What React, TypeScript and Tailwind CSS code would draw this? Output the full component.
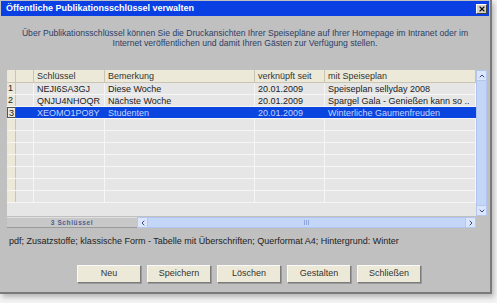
import { ChevronLeft, ChevronRight, ChevronUp, ChevronDown, X } from 'lucide-react';

type Row = { key: string; note: string; since: string; plan: string };

const rows: Row[] = [
  { key: 'NEJI6SA3GJ', note: 'Diese Woche', since: '20.01.2009', plan: 'Speiseplan sellyday 2008' },
  { key: 'QNJU4NHOQR', note: 'Nächste Woche', since: '20.01.2009', plan: 'Spargel Gala - Genießen kann so ..' },
  { key: 'XEOMO1PO8Y', note: 'Studenten', since: '20.01.2009', plan: 'Winterliche Gaumenfreuden' },
];

const SELECTED = 2;
const TOTAL_ROWS = 10;

function Cell({ w, children, sel }: { w: string; children?: React.ReactNode; sel?: boolean }) {
  return (
    <div
      className={`${w} shrink-0 h-full px-[3px] border-r truncate leading-[12px] ${
        sel ? 'border-[#0b45e0] text-[#c4d4ff]' : 'border-[#f6f6f6] text-[#222]'
      }`}
    >
      {children}
    </div>
  );
}

function HeadCell({ w, children }: { w: string; children?: React.ReactNode }) {
  return (
    <div className={`${w} shrink-0 h-full px-[3px] border-r border-[#c9c5b2] leading-[13px] text-[#333]`}>
      {children}
    </div>
  );
}

export default function App() {
  return (
    <div className="w-[497px] h-[303px] bg-[#f3f3f3] overflow-hidden [font-family:'Liberation_Sans',Arial,sans-serif]">
      <div className="w-[492px] h-[294px] bg-[#c0c0c0] border-r-2 border-b-2 border-[#7a7a7a] shadow-[2px_3px_5px_rgba(0,0,0,0.25)] flex flex-col">
        {/* Title bar */}
        <div className="mx-[1px] mt-[1px] h-[15px] bg-[#0a3fe4] flex items-center justify-between pl-[5px] pr-[2px]">
          <span className="text-white text-[9px] font-bold">Öffentliche Publikationsschlüssel verwalten</span>
          <div className="w-[11px] h-[10px] bg-[#d4d0c8] border-t border-l border-white border-r border-b border-r-[#404040] border-b-[#404040] flex items-center justify-center">
            <X className="w-[8px] h-[8px] text-[#111]" strokeWidth={3.5} />
          </div>
        </div>

        {/* Description */}
        <div className="mt-[12px] text-center text-[8.6px] leading-[10px] text-[#2c3e66]">
          <p>Über Publikationsschlüssel können Sie die Druckansichten Ihrer Speisepläne auf Ihrer Homepage im Intranet oder im</p>
          <p>Internet veröffentlichen und damit Ihren Gästen zur Verfügung stellen.</p>
        </div>

        {/* Table */}
        <div className="mt-[22px] ml-[7px] w-[480px] flex flex-col text-[9px]">
          <div className="h-[146px] flex">
            <div className="w-[469px] bg-[#e6e6e6] flex flex-col">
              <div className="h-[13px] flex bg-[#ece9d8] border-b border-[#c9c5b2]">
                <HeadCell w="w-[9px]" />
                <HeadCell w="w-[18px]" />
                <HeadCell w="w-[71px]">Schlüssel</HeadCell>
                <HeadCell w="w-[150px]">Bemerkung</HeadCell>
                <HeadCell w="w-[70px]">verknüpft seit</HeadCell>
                <HeadCell w="w-[151px]">mit Speiseplan</HeadCell>
              </div>
              {Array.from({ length: TOTAL_ROWS }).map((_, i) => {
                const r = rows[i];
                const sel = i === SELECTED;
                return (
                  <div key={i} className="h-[12px] flex border-b border-[#f6f6f6]">
                    <div
                      className={`w-[9px] shrink-0 h-full bg-[#ece9d8] text-[#222] leading-[11px] pl-[1px] ${
                        sel ? 'border border-[#555]' : 'border-r border-[#c9c5b2]'
                      }`}
                    >
                      {r ? i + 1 : ''}
                    </div>
                    <div className={`flex flex-1 h-full ${sel ? 'bg-[#0b45e0]' : ''}`}>
                      <Cell w="w-[18px]" sel={sel} />
                      <Cell w="w-[71px]" sel={sel}>{r?.key}</Cell>
                      <Cell w="w-[150px]" sel={sel}>{r?.note}</Cell>
                      <Cell w="w-[70px]" sel={sel}>{r?.since}</Cell>
                      <Cell w="w-[151px]" sel={sel}>{r?.plan}</Cell>
                    </div>
                  </div>
                );
              })}
            </div>
            {/* Vertical scrollbar */}
            <div className="w-[11px] flex flex-col bg-[#c4d6f8]">
              <div className="h-[11px] bg-[#dbe6fc] border border-[#b4c8ee] flex items-center justify-center">
                <ChevronUp className="w-[8px] h-[8px] text-[#3a4a7a]" strokeWidth={3} />
              </div>
              <div className="flex-1 bg-[#c4d6f8] border-x border-[#b0c6f0]" />
              <div className="h-[11px] bg-[#dbe6fc] border border-[#b4c8ee] flex items-center justify-center">
                <ChevronDown className="w-[8px] h-[8px] text-[#3a4a7a]" strokeWidth={3} />
              </div>
            </div>
          </div>
          {/* Horizontal scroll row */}
          <div className="mt-[1px] h-[11px] flex">
            <div className="w-[130px] bg-[#c8c8c8] border-t border-[#e0e0e0] border-b border-b-[#9a9a9a] flex items-center justify-center text-[6.5px] font-bold tracking-[0.6px] text-[#4a5e96]">
              3 Schlüssel
            </div>
            <div className="w-[11px] bg-[#dbe6fc] border border-[#b4c8ee] flex items-center justify-center">
              <ChevronLeft className="w-[8px] h-[8px] text-[#3a4a7a]" strokeWidth={3} />
            </div>
            <div className="w-[317px] bg-[#c4d6f8] border-y border-[#b0c6f0] flex items-center justify-center gap-[1px]">
              <span className="w-[1px] h-[5px] bg-[#8ea6d8]" />
              <span className="w-[1px] h-[5px] bg-[#8ea6d8]" />
              <span className="w-[1px] h-[5px] bg-[#8ea6d8]" />
            </div>
            <div className="w-[11px] bg-[#dbe6fc] border border-[#b4c8ee] flex items-center justify-center">
              <ChevronRight className="w-[8px] h-[8px] text-[#3a4a7a]" strokeWidth={3} />
            </div>
            <div className="w-[11px] bg-[#c0c0c0]" />
          </div>
        </div>

        {/* Status */}
        <div className="mt-[7px] pl-[9px] text-[9px] leading-[12px] text-[#222]">
          pdf; Zusatzstoffe; klassische Form - Tabelle mit Überschriften; Querformat A4; Hintergrund: Winter
        </div>

        {/* Buttons */}
        <div className="mt-[18px] pl-[77px] flex gap-[6px]">
          {['Neu', 'Speichern', 'Löschen', 'Gestalten', 'Schließen'].map((b) => (
            <button
              key={b}
              className="w-[64px] h-[18px] bg-[#ece9d8] border border-t-[#fafafa] border-l-[#fafafa] border-r-[#7c7c7c] border-b-[#7c7c7c] text-[9px] text-[#333] shadow-[1px_1px_0_#9a9a9a]"
            >
              {b}
            </button>
          ))}
        </div>
      </div>
    </div>
  );
}
